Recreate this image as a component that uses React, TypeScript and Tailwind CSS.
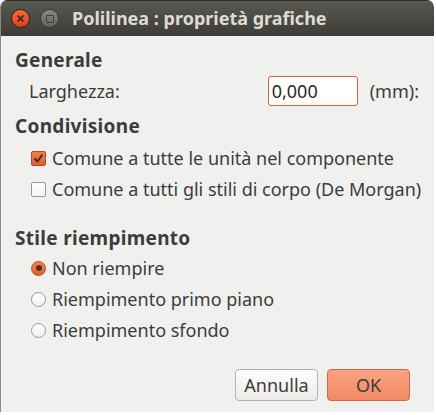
import { useState } from 'react';

function Check({ checked }: { checked: boolean }) {
	return checked ? (
		<span className="flex h-[15px] w-[15px] shrink-0 items-center justify-center rounded-[2px] border border-[#b8491f] bg-gradient-to-b from-[#f0804f] to-[#e0602f]">
			<svg width="11" height="11" viewBox="0 0 11 11">
				<path d="M1.5 5.5 L4.5 8.5 L9.5 1.5" fill="none" stroke="#4a2a1c" strokeWidth="2" />
			</svg>
		</span>
	) : (
		<span className="h-[15px] w-[15px] shrink-0 rounded-[2px] border border-[#9a9894] bg-gradient-to-b from-white to-[#f4f4f2]" />
	);
}

function Radio({ on }: { on: boolean }) {
	return on ? (
		<span className="flex h-[15px] w-[15px] shrink-0 items-center justify-center rounded-full border border-[#b8491f] bg-gradient-to-b from-[#f28452] to-[#e0602f]">
			<span className="h-[6px] w-[6px] rounded-full bg-[#5a2a18]" />
		</span>
	) : (
		<span className="h-[15px] w-[15px] shrink-0 rounded-full border border-[#9a9894] bg-gradient-to-b from-white to-[#f2f2f0]" />
	);
}

export default function App() {
	const [width, setWidth] = useState('0,000');
	const [shared, setShared] = useState(true);
	const [morgan, setMorgan] = useState(false);
	const [fill, setFill] = useState(0);
	const fills = ['Non riempire', 'Riempimento primo piano', 'Riempimento sfondo'];

	return (
		<div className="h-[415px] w-[436px] bg-white font-['Noto_Sans','DejaVu_Sans',sans-serif] text-[#3c3c3c]">
			<div className="flex h-[412px] w-[434px] flex-col overflow-hidden rounded-t-[7px] border-l border-[#8a8884] bg-[#f0f0ee]">
				<div className="flex h-[36px] shrink-0 items-center gap-[6px] border-t border-[#2e2d2a] bg-gradient-to-b from-[#5a5852] to-[#3d3c38] pl-[10px]">
					<span className="flex h-[19px] w-[19px] items-center justify-center rounded-full border border-[#3a2018] bg-gradient-to-b from-[#f4693a] to-[#d8441c]">
						<svg width="9" height="9" viewBox="0 0 9 9">
							<path d="M1.5 1.5 L7.5 7.5 M7.5 1.5 L1.5 7.5" stroke="#3a1a10" strokeWidth="1.6" />
						</svg>
					</span>
					<span className="ml-[4px] flex h-[19px] w-[19px] items-center justify-center rounded-full border border-[#3a3936] bg-gradient-to-b from-[#8a8880] to-[#66645e]">
						<span className="h-[8px] w-[8px] rounded-[1px] border border-[#3e3d39]" />
					</span>
					<span className="ml-[7px] text-[18px] font-bold text-[#dfdbd2]">Polilinea : proprietà grafiche</span>
				</div>

				<div className="flex flex-1 flex-col px-[14px] pt-[12px] text-[18px]">
					<div className="h-[24px] text-[19px] font-bold leading-[24px] tracking-[0.3px]">Generale</div>
					<div className="mt-[4px] flex h-[30px] items-center pl-[14px]">
						<span className="flex-1">Larghezza:</span>
						<input
							value={width}
							onChange={(e) => setWidth(e.target.value)}
							className="h-[30px] w-[90px] rounded-[3px] border border-[#e0602f] bg-white px-[3px] text-[18px] text-[#2a2a2a] outline-none"
						/>
						<span className="ml-[12px] mr-[1px]">(mm):</span>
					</div>

					<div className="mt-[8px] h-[24px] text-[19px] font-bold leading-[24px] tracking-[0.3px]">Condivisione</div>
					<div className="mt-[8px] flex flex-col gap-[7px] pl-[16px]">
						<label className="flex h-[24px] cursor-default items-center gap-[6px] whitespace-nowrap" onClick={() => setShared(!shared)}>
							<Check checked={shared} />
							<span>Comune a tutte le unità nel componente</span>
						</label>
						<label className="flex h-[24px] cursor-default items-center gap-[6px] whitespace-nowrap" onClick={() => setMorgan(!morgan)}>
							<Check checked={morgan} />
							<span>Comune a tutti gli stili di corpo (De Morgan)</span>
						</label>
					</div>

					<div className="mt-[25px] h-[24px] text-[19px] font-bold leading-[24px] tracking-[0.3px]">Stile riempimento</div>
					<div className="mt-[6px] flex flex-col gap-[7px] pl-[16px]">
						{fills.map((f, i) => (
							<label key={f} className="flex h-[24px] cursor-default items-center gap-[6px]" onClick={() => setFill(i)}>
								<Radio on={fill === i} />
								<span>{f}</span>
							</label>
						))}
					</div>

					<div className="mt-auto mb-[11px] flex justify-end gap-[9px] pr-[10px]">
						<button className="h-[32px] w-[83px] rounded-[4px] border border-[#b4b2ae] bg-gradient-to-b from-white to-[#eceae6] text-[18px] text-[#3c3c3c]">
							Annulla
						</button>
						<button className="h-[32px] w-[83px] rounded-[4px] border border-[#c9694a] bg-gradient-to-b from-[#f9a283] to-[#f28a64] text-[18px] text-[#3c3c3c]">
							OK
						</button>
					</div>
				</div>
			</div>
		</div>
	);
}
